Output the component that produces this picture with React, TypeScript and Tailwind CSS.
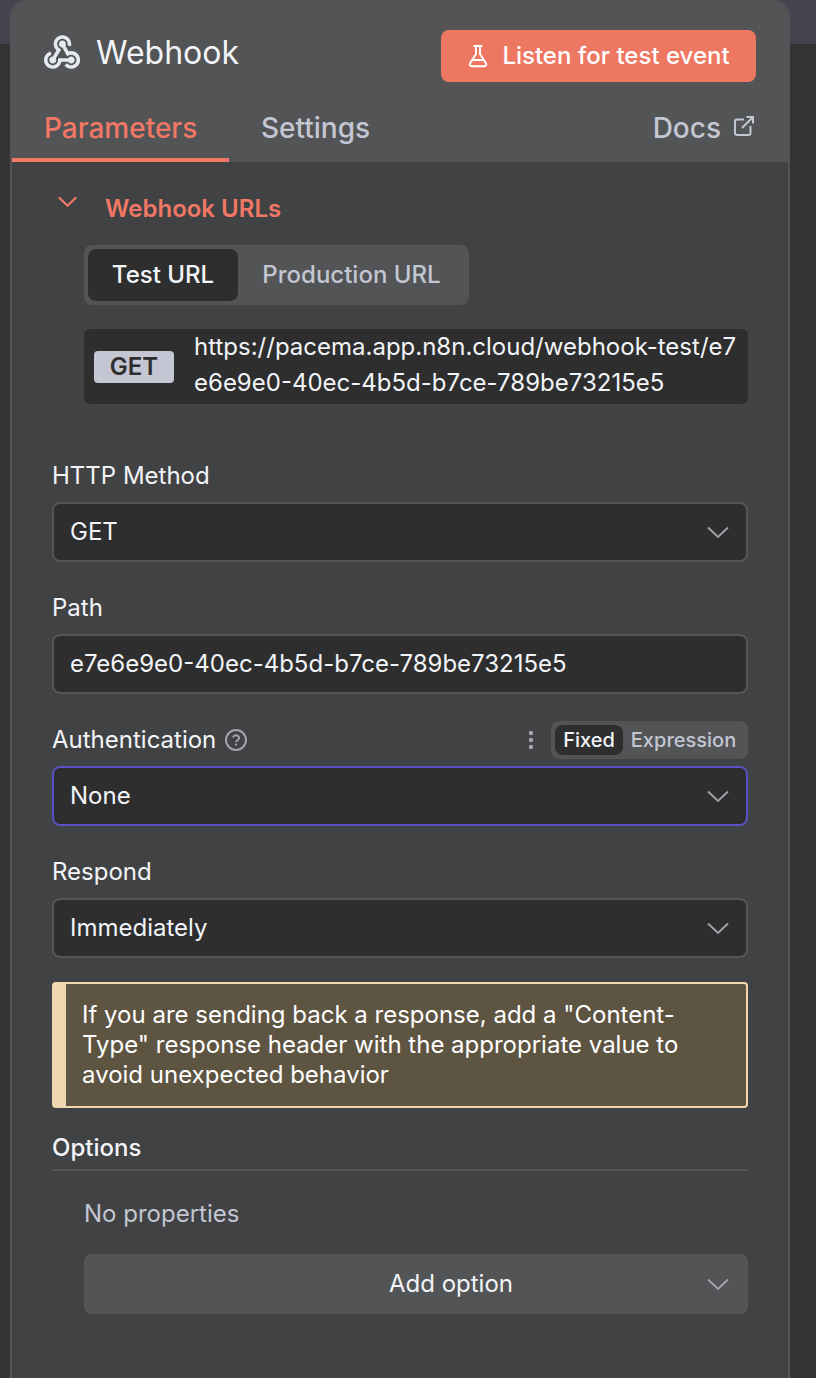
import type { ReactNode } from "react";

function WebhookIcon() {
  return (
    <svg viewBox="4 5 41 38" className="-mt-[2px] h-[34px] w-9 shrink-0" fill="#e6e8f2">
      <path d="M35 37c-2.2 0-4-1.8-4-4s1.8-4 4-4 4 1.8 4 4-1.8 4-4 4" />
      <path d="M35 43c-3 0-5.9-1.4-7.8-3.7l3.1-2.5c1.1 1.4 2.9 2.3 4.7 2.3 3.3 0 6-2.7 6-6s-2.7-6-6-6c-1 0-2 .3-2.9.7l-1.7 1L23.3 16l3.5-1.9 5.3 9.4c1-.3 2-.5 3-.5 5.5 0 10 4.5 10 10S40.5 43 35 43" />
      <path d="M14 43C8.500 43 4 38.500 4 33c0-4.600 3.100-8.500 7.500-9.700l1 3.900C9.900 27.900 8 30.300 8 33c0 3.300 2.700 6 6 6s6-2.700 6-6v-2h15v4H23.800C22.900 39.600 18.800 43 14 43" />
      <path d="M14 37c-2.200 0-4-1.800-4-4s1.800-4 4-4 4 1.800 4 4-1.800 4-4 4" />
      <path d="M25 19c-2.200 0-4-1.800-4-4s1.800-4 4-4 4 1.800 4 4-1.800 4-4 4" />
      <path d="M15.700 34l-3.400-2 5.900-9.700c-2-1.900-3.200-4.500-3.200-7.300 0-5.500 4.500-10 10-10s10 4.500 10 10c0 .9-.1 1.700-.3 2.500l-3.900-1c.1-.5.2-1 .2-1.500 0-3.300-2.700-6-6-6s-6 2.700-6 6c0 2.100 1.100 4 2.900 5.100l1.700 1z" />
    </svg>
  );
}

function FlaskIcon() {
  return (
    <svg viewBox="0 0 20 24" className="h-6 w-5" fill="none" stroke="currentColor" strokeWidth="2">
      <path d="M5.500 2h9" />
      <path d="M8 2v8L2.200 19c-1 1.600-.3 3.200 1.500 3.200h12.600c1.800 0 2.500-1.600 1.500-3.200L12 10V2" strokeLinejoin="round" />
      <path d="M4.800 16h10.400" />
    </svg>
  );
}

function ExternalIcon() {
  return (
    <svg viewBox="0 0 22 22" className="h-[22px] w-[22px]" fill="none" stroke="currentColor" strokeWidth="2">
      <path d="M11 4.500H4A2 2 0 0 0 2 6.500V18a2 2 0 0 0 2 2h11.500a2 2 0 0 0 2-2v-7" />
      <path d="M13.500 2H20v6.500M20 2 9 13" />
    </svg>
  );
}

function Chevron() {
  return (
    <svg viewBox="0 0 22 12" className="h-3 w-[22px] shrink-0" fill="none" stroke="#a3a5ae" strokeWidth="1.800">
      <path d="M1 1.500l10 9.500L21 1.500" />
    </svg>
  );
}

function HelpIcon() {
  return (
    <svg viewBox="0 0 24 24" className="h-6 w-6" fill="none" stroke="#a3a5ae" strokeWidth="2">
      <circle cx="12" cy="12" r="10" />
      <path d="M9 9.300a3.100 3.100 0 0 1 6 .9c0 2-3 2.400-3 3.800" />
      <path d="M12 15.500v2" />
    </svg>
  );
}

function Field({ label, value, select, active, extra }: { label: ReactNode; value: string; select?: boolean; active?: boolean; extra?: ReactNode }) {
  return (
    <div className="mb-5">
      <div className="flex h-[52px] items-center justify-between">
        <div className="flex items-center gap-2">{label}</div>
        {extra}
      </div>
      <div className={`flex h-15 items-center justify-between rounded-lg border-2 bg-[#2e2e2e] pr-[17px] pl-4 ${active ? "border-[#5b4fc4]" : "border-[#535456]"}`}>
        <span>{value}</span>
        {select && <Chevron />}
      </div>
    </div>
  );
}

export default function App() {
  return (
    <div className="h-[1378px] w-[816px] overflow-hidden bg-[linear-gradient(to_bottom,#46434f_0_44px,#333333_44px)] px-[10px] font-['Inter',sans-serif] text-2xl leading-9 text-[#f2f4f8]">
      <main className="flex h-[1390px] w-[780px] flex-col rounded-t-2xl border-x-2 border-[#535456] bg-[#414244]">
        <header className="h-[162px] rounded-t-2xl bg-[#535456] pt-[30px]">
          <div className="flex h-[52px] items-start justify-between pr-8 pl-8">
            <div className="flex items-center gap-4 pt-[5px]">
              <WebhookIcon />
              <h1 className="text-[32px] leading-9">Webhook</h1>
            </div>
            <button className="flex h-[52px] w-[315px] items-center justify-center gap-[14px] rounded-lg bg-[#ee7762] pl-px font-medium whitespace-nowrap text-white">
              <FlaskIcon />
              Listen for test event
            </button>
          </div>
          <nav className="flex h-20 items-stretch text-[28px] font-medium text-[#c3c6d3]">
            <div className="w-[217px] border-b-4 border-[#f07865] pt-[28px] pl-8 text-[#f07865]">Parameters</div>
            <div className="pt-[28px] pl-8">Settings</div>
            <div className="ml-auto flex gap-3 pt-[28px] pr-[33px]">
              Docs
              <span className="pt-[5px]"><ExternalIcon /></span>
            </div>
          </nav>
        </header>

        <section className="px-10">
          <div className="flex h-[83px] items-start pt-[28px] pl-[6px] text-[#f07865]">
            <svg viewBox="0 0 20 12" className="mt-[6px] h-3 w-5" fill="none" stroke="currentColor" strokeWidth="2.200" strokeLinecap="round" strokeLinejoin="round">
              <path d="M1.500 2l8 7.800L17.500 2" />
            </svg>
            <h2 className="mt-px ml-[27px] font-semibold">Webhook URLs</h2>
          </div>
          <div className="ml-8 flex h-15 w-[385px] rounded-lg bg-[#535456] p-1 font-medium">
            <div className="flex w-[150px] items-center justify-center rounded-lg bg-[#2e2e2e]">Test URL</div>
            <div className="flex flex-1 items-center justify-center text-[#c3c6d3]">Production URL</div>
          </div>
          <div className="mt-6 ml-8 flex h-[75px] items-start rounded-md bg-[#2e2e2e] pl-[10px]">
            <div className="mt-[22px] flex h-8 w-20 items-center justify-center rounded bg-[#c4c7d3] font-semibold text-[#2e2e2e]">GET</div>
            <div className="ml-5 whitespace-nowrap">
              https://pacema.app.n8n.cloud/webhook-test/e7
              <br />
              e6e9e0-40ec-4b5d-b7ce-789be73215e5
            </div>
          </div>

          <div className="mt-[46px]">
            <Field label="HTTP Method" value="GET" select />
            <Field label="Path" value="e7e6e9e0-40ec-4b5d-b7ce-789be73215e5" />
            <Field
              label={<>Authentication<HelpIcon /></>}
              value="None"
              select
              active
              extra={
                <div className="flex items-center">
                  <svg viewBox="0 0 6 20" className="mr-[17px] h-5 w-[6px]" fill="#a3a5ae">
                    <circle cx="3" cy="3" r="2.200" />
                    <circle cx="3" cy="10" r="2.200" />
                    <circle cx="3" cy="17" r="2.200" />
                  </svg>
                  <div className="flex h-[38px] w-[197px] rounded-lg bg-[#535456] p-1 text-[20px] leading-[30px] font-medium">
                    <div className="w-[68px] rounded-lg bg-[#2e2e2e] text-center">Fixed</div>
                    <div className="flex-1 text-center text-[#c3c6d3]">Expression</div>
                  </div>
                </div>
              }
            />
            <Field label="Respond" value="Immediately" select />
          </div>

          <div className="mt-6 h-[126px] rounded border-2 border-l-[14px] border-[#f0d7b0] bg-[#5e5442] pt-4 pl-4 leading-[30px] whitespace-nowrap text-white">
            If you are sending back a response, add a "Content-
            <br />
            Type" response header with the appropriate value to
            <br />
            avoid unexpected behavior
          </div>
          <h3 className="mt-[22px] h-[41px] border-b-2 border-[#535456] font-medium">Options</h3>
          <p className="mt-[25px] ml-8 text-[#c3c6d3]">No properties</p>
          <button className="mt-[22px] ml-8 grid h-15 w-[664px] grid-cols-[1fr_22px] items-center rounded-lg bg-[#535456] pr-[19px] pl-[111px]">
            <span>Add option</span>
            <Chevron />
          </button>
        </section>
      </main>
    </div>
  );
}
